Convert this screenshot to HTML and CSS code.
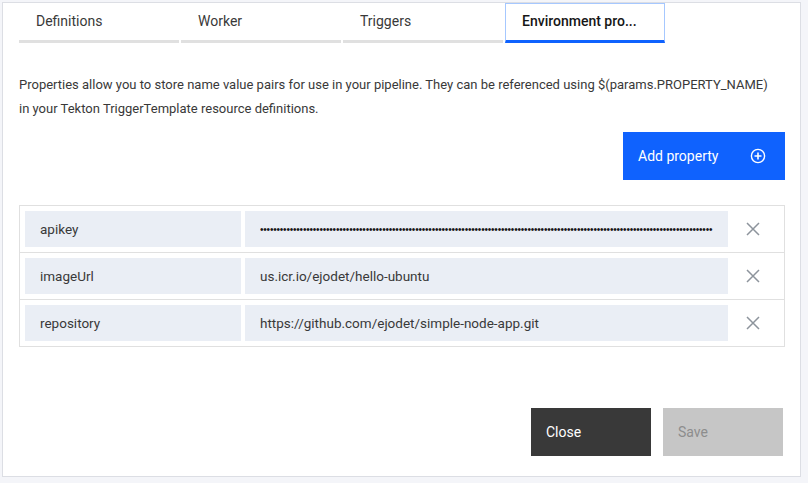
FILE: index.html
```html
<!DOCTYPE html>
<html lang="en">
<head>
<meta charset="utf-8">
<title>Environment properties</title>
<link rel="stylesheet" href="styles.css">
</head>
<body>
<div class="panel">
  <div class="tabs">
    <div class="tab">Definitions</div>
    <div class="tab">Worker</div>
    <div class="tab">Triggers</div>
    <div class="tab active">Environment pro...</div>
  </div>
  <p class="desc">Properties allow you to store name value pairs for use in your pipeline. They can be referenced using $(params.PROPERTY_NAME) in your Tekton TriggerTemplate resource definitions.</p>
  <div class="actions">
    <button class="btn-primary">Add property
      <svg class="icon-add" width="16" height="16" viewBox="0 0 16 16"><circle cx="8" cy="8" r="6.6" fill="none" stroke="#fff" stroke-width="1.4"/><path d="M8 4.5v7M4.5 8h7" stroke="#fff" stroke-width="1.6"/></svg>
    </button>
  </div>
  <div class="table">
    <div class="row">
      <div class="cell key">apikey</div>
      <div class="cell value"><span class="mask">•••••••••••••••••••••••••••••••••••••••••••••••••••••••••••••••••••••••••••••••••••••••••••••••••••••••••••••••••••••••••••••••••••••••••</span></div>
      <div class="remove"><svg width="14" height="14" viewBox="0 0 14 14"><path d="M1 1l12 12M13 1L1 13" stroke="#8d949c" stroke-width="1.5"/></svg></div>
    </div>
    <div class="row">
      <div class="cell key">imageUrl</div>
      <div class="cell value">us.icr.io/ejodet/hello-ubuntu</div>
      <div class="remove"><svg width="14" height="14" viewBox="0 0 14 14"><path d="M1 1l12 12M13 1L1 13" stroke="#8d949c" stroke-width="1.5"/></svg></div>
    </div>
    <div class="row">
      <div class="cell key">repository</div>
      <div class="cell value">https://github.com/ejodet/simple-node-app.git</div>
      <div class="remove"><svg width="14" height="14" viewBox="0 0 14 14"><path d="M1 1l12 12M13 1L1 13" stroke="#8d949c" stroke-width="1.5"/></svg></div>
    </div>
  </div>
  <div class="footer">
    <button class="btn-close">Close</button>
    <button class="btn-save">Save</button>
  </div>
</div>
</body>
</html>
```
FILE: styles.css
```css
* { box-sizing: border-box; }
html, body { margin: 0; padding: 0; }
body {
  background: #f4f5f9;
  font-family: Roboto, "Liberation Sans", sans-serif;
  color: #262626;
  padding: 2px 7px 6px 2px;
}
.panel {
  background: #fff;
  border: 1px solid #dcdee4;
  height: 475px;
  width: 799px;
  padding: 0 15px 20px 16px;
  display: flex;
  flex-direction: column;
}
.tabs {
  display: flex;
  gap: 2px;
}
.tab {
  width: 160px;
  height: 40px;
  border-bottom: 3px solid #e0e0e0;
  padding: 10px 0 0 17px;
  font-size: 14px;
  color: #393939;
}
.tab.active {
  border: 1px solid #a6c8ff;
  border-bottom: 3px solid #0f62fe;
  padding: 9px 0 0 16px;
  font-weight: 500;
  color: #161616;
}
.desc {
  margin: 30px 0 0;
  max-width: 756px;
  font-size: 13px;
  line-height: 24px;
  color: #393939;
}
.actions {
  display: flex;
  justify-content: flex-end;
  margin-top: 11px;
}
.btn-primary {
  width: 162px;
  height: 48px;
  background: #0f62fe;
  border: none;
  color: #fff;
  font-family: inherit;
  font-size: 14px;
  display: flex;
  align-items: center;
  justify-content: space-between;
  padding: 0 19px 0 15px;
}
.table {
  margin-top: 25px;
  border: 1px solid #e0e0e0;
}
.row {
  display: flex;
  align-items: center;
  padding: 5px 0 5px 5px;
  gap: 4px;
}
.row + .row { border-top: 1px solid #e0e0e0; }
.cell {
  height: 36px;
  background: #eaeef5;
  display: flex;
  align-items: center;
  padding: 0 15px;
  font-size: 13.5px;
  color: #393939;
  overflow: hidden;
  white-space: nowrap;
}
.key { width: 216px; }
.value { width: 483px; }
.mask {
  font-family: "Liberation Sans", sans-serif;
  font-size: 10px;
  letter-spacing: -0.2px;
  display: block;
  width: 454px;
  overflow: hidden;
  color: #161616;
}
.remove {
  flex: 1;
  display: flex;
  justify-content: center;
  padding-right: 10px;
}
.remove svg { display: block; }
.footer {
  margin-top: auto;
  display: flex;
  justify-content: flex-end;
  gap: 12px;
  padding-right: 2px;
}
.footer button {
  width: 120px;
  height: 48px;
  border: none;
  font-family: inherit;
  font-size: 14px;
  text-align: left;
  padding: 0 15px;
}
.btn-close { background: #393939; color: #fff; }
.btn-save { background: #c6c6c6; color: #8d8d8d; }
```
